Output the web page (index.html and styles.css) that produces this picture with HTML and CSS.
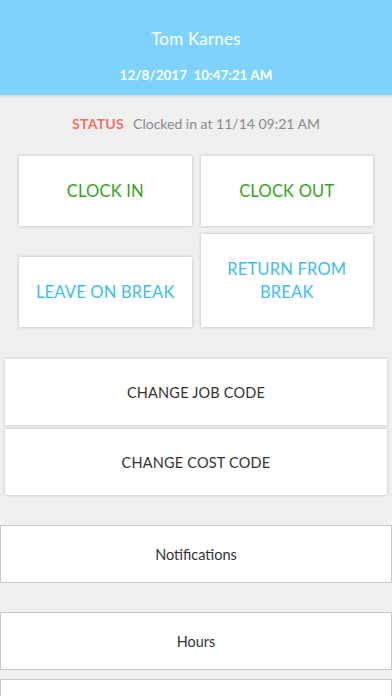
FILE: index.html
```html
<!DOCTYPE html>
<html>
<head>
<meta charset="utf-8">
<link rel="stylesheet" href="styles.css">
</head>
<body>
<header class="header">
  <div class="name">Tom Karnes</div>
  <div class="datetime">12/8/2017&nbsp; 10:47:21 AM</div>
</header>
<div class="status"><span class="status-label">STATUS</span><span class="status-text">Clocked in at 11/14 09:21 AM</span></div>
<div class="actions">
  <div class="row row-top">
    <div class="card green">CLOCK IN</div>
    <div class="card green">CLOCK OUT</div>
  </div>
  <div class="row row-bottom">
    <div class="card blue">LEAVE ON BREAK</div>
    <div class="card blue tall">RETURN FROM<br>BREAK</div>
  </div>
</div>
<div class="codes">
  <div class="code">CHANGE JOB CODE</div>
  <div class="code">CHANGE COST CODE</div>
</div>
<div class="menu">
  <div class="item">Notifications</div>
  <div class="item">Hours</div>
  <div class="item item-last"></div>
</div>
</body>
</html>
```
FILE: styles.css
```css
html, body {
  margin: 0;
  padding: 0;
}
body {
  background: #efefef;
  font-family: Lato, "Open Sans", sans-serif;
  width: 392px;
  height: 696px;
  overflow: hidden;
}
.header {
  height: 95px;
  background: #7dd3fe;
  color: #fff;
  text-align: center;
  box-shadow: 0 1px 3px rgba(0,0,0,0.15);
  position: relative;
  box-sizing: border-box;
  padding-top: 28px;
}
.name {
  font-size: 17px;
  line-height: 22px;
  letter-spacing: 0.2px;
}
.datetime {
  margin-top: 16px;
  font-size: 13.5px;
  line-height: 18px;
  font-weight: 700;
}
.status {
  height: 56px;
  line-height: 57px;
  text-align: center;
  font-size: 14px;
}
.status-label {
  color: #f07262;
  font-weight: 700;
  margin-right: 9px;
  letter-spacing: 0.3px;
}
.status-text {
  color: #8a8a8a;
}
.actions {
  padding: 5px 19px 0 19px;
}
.row {
  display: flex;
  gap: 9px;
}
.row-top {
  margin-bottom: 8px;
}
.row-bottom {
  align-items: flex-end;
}
.card {
  flex: 1;
  background: #fff;
  height: 70px;
  display: flex;
  align-items: center;
  justify-content: center;
  text-align: center;
  font-size: 16.5px;
  line-height: 23px;
  box-shadow: 0 0 3px rgba(0,0,0,0.22);
  letter-spacing: 0.2px;
}
.card.tall {
  height: 93px;
}
.green {
  color: #35a51c;
}
.blue {
  color: #3dbcf8;
}
.codes {
  padding: 32px 5px 0 5px;
  display: flex;
  flex-direction: column;
  gap: 4px;
}
.code {
  background: #fff;
  height: 66px;
  display: flex;
  align-items: center;
  justify-content: center;
  font-size: 14.5px;
  color: #333;
  box-shadow: 0 0 3px rgba(0,0,0,0.2);
  letter-spacing: 0.2px;
}
.menu {
  padding-top: 30px;
}
.item {
  background: #fff;
  border: 1px solid #c8c8c8;
  height: 56px;
  display: flex;
  align-items: center;
  justify-content: center;
  font-size: 14.5px;
  color: #333;
  margin-bottom: 29px;
}
.item:nth-child(2) {
  margin-bottom: 9px;
}
.item-last {
  margin-bottom: 0;
}
```
